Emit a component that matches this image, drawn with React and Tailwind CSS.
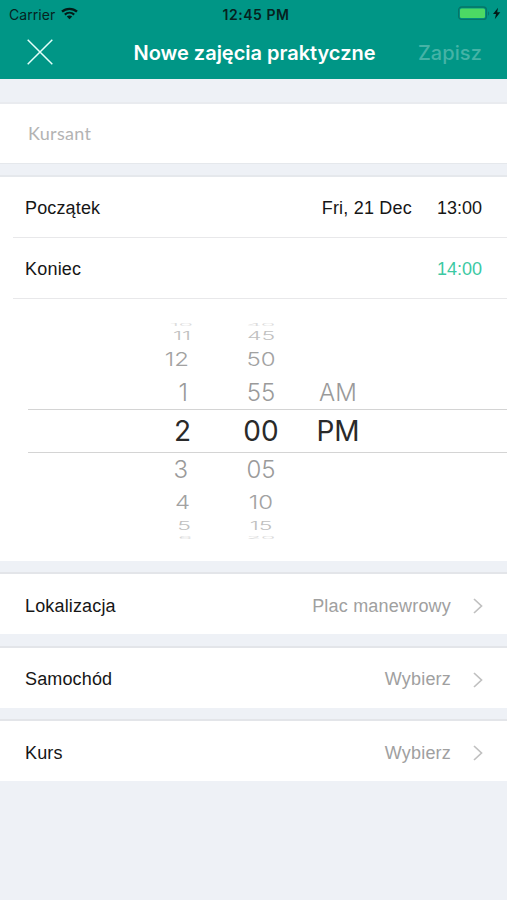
import React from 'react';

const wheelRows = [
	{ hour: '10', minute: '40', row: 'h-2 text-[23px] text-[#dcdcdc]', scale: 'scale-y-[0.17]', hourCell: 'w-[193px]' },
	{ hour: '11', minute: '45', row: 'h-[17px] text-[23px] text-[#c0c0c0]', scale: 'scale-y-[0.48]', hourCell: 'w-[191px]' },
	{ hour: '12', minute: '50', row: 'h-[29px] pt-px text-[24px] text-[#a2a2a2]', scale: 'scale-y-[0.78]', hourCell: 'w-[189px]' },
	{ hour: '1', minute: '55', period: 'AM', row: 'h-[35px] pt-0.5 text-[24px] text-[#9a9a9a]', scale: 'scale-y-[0.98]', hourCell: 'w-[188px]' },
	{ hour: '2', minute: '00', period: 'PM', row: 'h-[44px] text-[28px] font-normal text-[#2a2a2a]', scale: 'scale-y-100', hourCell: 'w-[191px]', selected: true },
	{ hour: '3', minute: '05', row: 'h-[33px] text-[24px] text-[#9a9a9a]', scale: 'scale-y-[0.98]', hourCell: 'w-[188px]' },
	{ hour: '4', minute: '10', row: 'h-[32px] pt-px text-[24px] text-[#a2a2a2]', scale: 'scale-y-[0.78]', hourCell: 'w-[190px]' },
	{ hour: '5', minute: '15', row: 'h-[16px] text-[23px] text-[#c0c0c0]', scale: 'scale-y-[0.48]', hourCell: 'w-[191px]' },
	{ hour: '6', minute: '20', row: 'h-[7px] text-[23px] text-[#d8d8d8]', scale: 'scale-y-[0.14]', hourCell: 'w-[192px]' },
];

const StatusBar = () => (
	<div className="flex h-7 items-center px-[9px] text-[#06231f]">
		<div className="flex flex-1 items-center gap-1.5">
			<span className="text-[14px] tracking-[0.05px]">Carrier</span>
			<svg width="17" height="13" viewBox="0 0 17 13" fill="none" stroke="#031b18" className="-mt-0.5">
				<path d="M1 4.7C5.2.8 11.8.8 16 4.7" strokeWidth="2.3" />
				<path d="M3.8 7.6c2.7-2.4 6.7-2.4 9.4 0" strokeWidth="2.1" />
				<path d="M8.5 12.2 5.8 9.5c1.5-1.4 3.9-1.4 5.4 0z" fill="#031b18" stroke="none" />
			</svg>
		</div>
		<span className="ml-[5px] text-[14px] font-semibold tracking-[0.55px]">12:45 PM</span>
		<div className="flex flex-1 items-center justify-end">
			<svg width="44" height="15" viewBox="0 0 44 15" className="-mr-1 -mt-px">
				<rect x="0.6" y="1" width="27.8" height="12.4" rx="3" fill="none" stroke="#067568" strokeWidth="1.3" />
				<rect x="2" y="2.4" width="25" height="9.6" rx="1.6" fill="#4cd964" />
				<path d="M30 5.3c1.6.7 1.6 3.7 0 4.4z" fill="#067568" />
				<path d="M40 1.7 35 8h3l-1.2 5.2 5.5-6.9h-3.1z" fill="#031b18" />
			</svg>
		</div>
	</div>
);

const Header = () => (
	<header className="h-[79px] bg-[#009686]">
		<StatusBar />
		<div className="flex h-[48px] items-center pl-[27px] pr-[25px]">
			<div className="flex-1">
				<svg width="26" height="26" viewBox="0 0 26 26" stroke="#e3fffa" strokeWidth="1.5">
					<path d="M.7.7l24.6 24.6M25.3.7.7 25.3" />
				</svg>
			</div>
			<h1 className="pt-px text-[20px] font-semibold tracking-[-0.02px] text-white">Nowe zajęcia praktyczne</h1>
			<div className="flex-1 pt-px text-right text-[20px] font-medium tracking-[0.1px] text-[#45b3a6]">Zapisz</div>
		</div>
	</header>
);

const TimeWheel = () => (
	<div className="h-[262px] pt-[21px] font-[Inter,sans-serif] font-light">
		{wheelRows.map((r) => (
			<div key={r.hour} className={r.selected ? 'ml-7 border-y border-[#d4d4d4]' : 'ml-7'}>
				<div className={`-ml-7 flex items-center leading-none ${r.row} ${r.selected ? '-my-px' : ''}`}>
					<span className={`text-right ${r.hourCell} ${r.scale}`}>{r.hour}</span>
					<span className="flex-1" />
					<span className={`w-[60px] text-center ${r.scale}`}>{r.minute}</span>
					<span className="ml-[12px] mr-[134px] w-[70px] text-center">{r.period}</span>
				</div>
			</div>
		))}
	</div>
);

const PickRow = ({ label, value }) => (
	<div className="flex h-[60px] items-center bg-white pl-[25px] pr-[24px] pt-1">
		<span className="flex-1 tracking-[0.15px]">{label}</span>
		<span className="mr-[22px] tracking-[0.2px] text-[#a0a0a0]">{value}</span>
		<svg width="10" height="16" viewBox="0 0 10 16" fill="none" stroke="#c0c0c0" strokeWidth="1.7">
			<path d="M1 1l7.5 7L1 15" />
		</svg>
	</div>
);

const Gap = () => <div className="h-[13.4px] border-b-2 border-[#e3e5e9]" />;

const App = () => (
	<div className="h-[900px] w-[507px] overflow-hidden bg-[#eef1f6] font-['Liberation_Sans',Arial,sans-serif] text-[18px] text-[#161616]">
		<div className="font-[Inter,sans-serif]"><Header /></div>
		<div className="h-[25px] border-b-2 border-[#e9ebef]" />
		<div className="flex h-[59px] items-center bg-white pl-7 font-[Lato,sans-serif] text-[18px] tracking-[0.3px] text-[#b3b3b3]">Kursant</div>
		<div className="h-[14px] border-b-2 border-t border-[#e5e8ec]" />
		<section className="bg-white">
			<div className="flex h-[60px] items-center pl-[25px] pr-[25px] pt-0.5">
				<span className="flex-1 tracking-[0.15px]">Początek</span>
				<span className="tracking-[0.2px]">Fri, 21 Dec</span>
				<span className="ml-[25px]">13:00</span>
			</div>
			<div className="ml-[13px] border-t border-[#e8e8ea]" />
			<div className="flex h-[60px] items-center pl-[25px] pr-[25px] pt-0.5">
				<span className="flex-1 tracking-[0.2px]">Koniec</span>
				<span className="text-[#3cc9a3]">14:00</span>
			</div>
			<div className="ml-[13px] border-t border-[#e8e8ea]" />
			<TimeWheel />
		</section>
		<Gap />
		<PickRow label="Lokalizacja" value="Plac manewrowy" />
		<Gap />
		<PickRow label="Samochód" value="Wybierz" />
		<Gap />
		<PickRow label="Kurs" value="Wybierz" />
	</div>
);

export default App;
